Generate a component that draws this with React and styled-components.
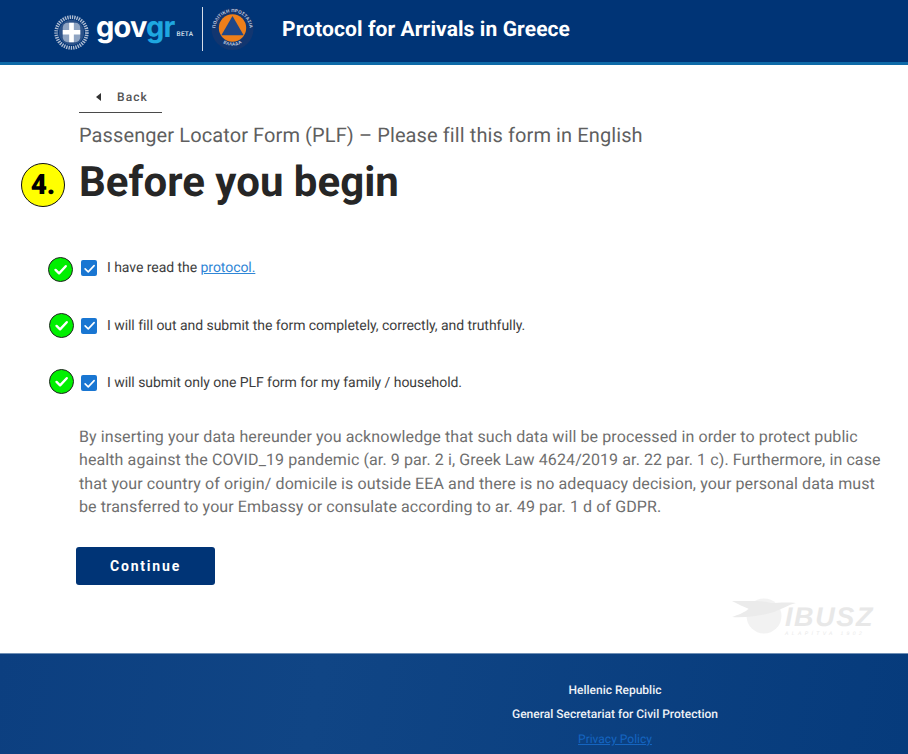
import React from "react";
import styled, { createGlobalStyle } from "styled-components";

const GlobalStyle = createGlobalStyle`
  html, body { margin: 0; padding: 0; background: #fff; }
  body {
    font-family: Roboto, "Liberation Sans", sans-serif;
    color: #212121;
    text-rendering: geometricPrecision;
  }
`;

const Emblem = () => (
  <svg width="35" height="35" viewBox="0 0 36 36">
    <circle cx="18" cy="18" r="15.8" fill="none" stroke="#aebcd2" strokeWidth="3.8" strokeDasharray="1.4 1" />
    <circle cx="18" cy="18" r="13" fill="#2c5288" />
    <rect x="9" y="8" width="18" height="20" rx="5" fill="#8fa4c2" />
    <path d="M15.6 8h4.8v7.4H27v4.6h-6.6V28h-4.8v-8H9v-4.6h6.6z" fill="#fff" />
  </svg>
);

const CivilProtection = () => (
  <svg width="43" height="44" viewBox="0 0 44 44">
    <defs>
      <path id="ringTop" d="M4.6 24a17.5 17.5 0 1 1 34.8 0" />
      <path id="ringBottom" d="M7 31a18 18 0 0 0 30 0" />
    </defs>
    <circle cx="22" cy="22" r="21.5" fill="#123670" />
    <RingText>
      <textPath href="#ringTop" startOffset="50%" textAnchor="middle">ΠΟΛΙΤΙΚΗ ΠΡΟΣΤΑΣΙΑ</textPath>
    </RingText>
    <RingText>
      <textPath href="#ringBottom" startOffset="50%" textAnchor="middle">ΕΛΛΑΔΑ</textPath>
    </RingText>
    <circle cx="22" cy="21" r="14" fill="#ef7f1a" />
    <path d="M22 8.6 33.4 28.4H10.6z" fill="#1f4788" />
  </svg>
);

const Check = ({ size, stroke, color }) => (
  <svg width={size} height={size} viewBox="0 0 24 24" fill="none">
    <path d="M5 12.6 10 17.4 19.4 7.4" stroke={color} strokeWidth={stroke} strokeLinecap="round" strokeLinejoin="round" />
  </svg>
);

const Watermark = () => (
  <WatermarkBox>
    <svg width="66" height="36" viewBox="0 0 66 36">
      <circle cx="33" cy="18" r="17.5" fill="#f2f2f2" />
      <path d="M1 3h24c6 0 11 1 15 2 6 0 15-1 25 0-8 2-14 6-22 9-10 3-26 6-42 5 6-2 13-5 17-8C13 9 7 6 1 3z" fill="#ebebeb" />
    </svg>
    <WatermarkText>
      IBUSZ
      <WatermarkSub>ALAPÍTVA 1902</WatermarkSub>
    </WatermarkText>
  </WatermarkBox>
);

const items = [
  { id: 1, text: "I have read the ", link: "protocol.", markTop: 1, markLeft: -33 },
  { id: 2, text: "I will fill out and submit the form completely, correctly, and truthfully.", markTop: -1, markLeft: -32 },
  { id: 3, text: "I will submit only one PLF form for my family / household.", markTop: -2, markLeft: -32 },
];

export default function App() {
  return (
    <>
      <GlobalStyle />
      <Page>
        <Header>
          <LogoRow>
            <EmblemSlot><Emblem /></EmblemSlot>
            <GovText>gov<GovAccent>gr</GovAccent></GovText>
            <Beta>BETA</Beta>
            <LogoDivider />
            <CivilProtection />
          </LogoRow>
          <HeaderTitle>Protocol for Arrivals in Greece</HeaderTitle>
        </Header>

        <Main>
          <BackLink>
            <BackArrow />
            Back
          </BackLink>
          <Subtitle>Passenger Locator Form (PLF) – Please fill this form in English</Subtitle>
          <Title>
            <StepBadge>4.</StepBadge>
            Before you begin
          </Title>

          <CheckList>
            {items.map((item) => (
              <CheckRow key={item.id}>
                <GreenMark $top={item.markTop} $left={item.markLeft}>
                  <Check size={17} stroke={3.4} color="#fff" />
                </GreenMark>
                <CheckBox>
                  <Check size={15} stroke={2.6} color="#fff" />
                </CheckBox>
                <CheckLabel>
                  {item.text}
                  {item.link && <ProtocolLink href="#">{item.link}</ProtocolLink>}
                </CheckLabel>
              </CheckRow>
            ))}
          </CheckList>

          <Notice>
            By inserting your data hereunder you acknowledge that such data will be processed in order to protect public
            health against the COVID_19 pandemic (ar. 9 par. 2 i, Greek Law 4624/2019 ar. 22 par. 1 c). Furthermore, in case
            that your country of origin/ domicile is outside EEA and there is no adequacy decision, your personal data must
            be transferred to your Embassy or consulate according to ar. 49 par. 1 d of GDPR.
          </Notice>

          <ContinueButton>Continue</ContinueButton>
          <Watermark />
        </Main>

        <Footer>
          <FooterColumn>
            <FooterLine>Hellenic Republic</FooterLine>
            <FooterLine>General Secretariat for Civil Protection</FooterLine>
            <FooterLink href="#">Privacy Policy</FooterLink>
          </FooterColumn>
        </Footer>
      </Page>
    </>
  );
}

const Page = styled.div`
  width: 908px;
  height: 754px;
  overflow: hidden;
  display: flex;
  flex-direction: column;
`;

const Header = styled.header`
  height: 62px;
  flex: none;
  display: flex;
  align-items: center;
  padding-left: 54px;
  background: #003476;
  border-bottom: 3px solid #0e6aa8;
  box-sizing: content-box;
`;

const LogoRow = styled.div`
  display: flex;
  align-items: center;
  margin-top: -4px;
  width: 228px;
`;

const EmblemSlot = styled.span`
  display: flex;
  margin-top: 6px;
`;

const RingText = styled.text`
  font-family: "Liberation Sans", sans-serif;
  font-size: 4.6px;
  font-weight: 700;
  letter-spacing: 0.2px;
  fill: #c3cfe0;
`;

const GovText = styled.span`
  margin: -5px 0 0 7px;
  font-family: Inter, sans-serif;
  font-weight: 700;
  font-size: 29px;
  line-height: 36px;
  letter-spacing: -0.8px;
  color: #fff;
`;

const GovAccent = styled.span`
  color: #1ea7e0;
`;

const Beta = styled.span`
  font-size: 6.5px;
  font-weight: 500;
  letter-spacing: 0.2px;
  color: #dfe6f0;
  margin: 9px 0 0 2px;
`;

const LogoDivider = styled.span`
  width: 1px;
  height: 44px;
  background: #d5dde8;
  margin: 0 8px 0 9px;
`;

const HeaderTitle = styled.h1`
  margin: -3px 0 0;
  font-size: 21px;
  font-weight: 700;
  letter-spacing: 0.1px;
  color: #fff;
`;

const Main = styled.main`
  position: relative;
  flex: 1;
  padding: 20px 0 0 79px;
`;

const BackLink = styled.div`
  width: 83px;
  height: 28px;
  box-sizing: border-box;
  display: flex;
  align-items: center;
  padding: 0 0 4px 17px;
  gap: 16px;
  border-bottom: 1px solid #4a4a4a;
  font-size: 12px;
  font-weight: 500;
  letter-spacing: 1.1px;
  color: #555;
`;

const BackArrow = styled.span`
  width: 0;
  height: 0;
  border-style: solid;
  border-width: 4px 5px 4px 0;
  border-color: transparent #333 transparent transparent;
`;

const Subtitle = styled.p`
  margin: 9px 0 0;
  font-size: 20px;
  line-height: 26px;
  letter-spacing: 0.1px;
  color: #5f5f5f;
`;

const Title = styled.h2`
  position: relative;
  margin: 10px 0 0;
  font-size: 42px;
  line-height: 50px;
  font-weight: 700;
  color: #262626;
`;

const StepBadge = styled.span`
  position: absolute;
  left: -58px;
  top: 5px;
  width: 42px;
  height: 42px;
  border: 1px solid #111;
  border-radius: 50%;
  background: #ffff00;
  display: flex;
  align-items: center;
  justify-content: center;
  font-size: 28px;
  font-weight: 900;
  color: #000;
`;

const CheckList = styled.div`
  margin-top: 48px;
  margin-left: 2px;
  display: flex;
  flex-direction: column;
  gap: 33.5px;
`;

const CheckRow = styled.div`
  position: relative;
  height: 24px;
  display: flex;
  align-items: center;
  gap: 10px;
`;

const GreenMark = styled.span`
  position: absolute;
  left: ${(p) => p.$left}px;
  top: ${(p) => p.$top}px;
  width: 23px;
  height: 23px;
  border: 1px solid #222;
  border-radius: 50%;
  background: #00f000;
  display: flex;
  align-items: center;
  justify-content: center;
`;

const CheckBox = styled.span`
  width: 16px;
  height: 16px;
  border-radius: 2px;
  background: #1976d2;
  display: flex;
  align-items: center;
  justify-content: center;
`;

const CheckLabel = styled.span`
  font-size: 14px;
  letter-spacing: -0.05px;
  color: #3d3d3d;
`;

const ProtocolLink = styled.a`
  color: #2f86d6;
`;

const Notice = styled.p`
  margin: 30px 0 0;
  width: 815px;
  font-size: 16px;
  line-height: 23.4px;
  letter-spacing: 0.1px;
  color: #6f6f6f;
`;

const ContinueButton = styled.button`
  display: block;
  margin: 28px 0 0 -3px;
  padding: 1px 0 0;
  width: 139px;
  height: 38px;
  border: 0;
  border-radius: 3px;
  background: #003476;
  color: #fff;
  font-family: Roboto, sans-serif;
  font-size: 14px;
  font-weight: 700;
  letter-spacing: 1.8px;
`;

const WatermarkBox = styled.div`
  position: absolute;
  left: 731px;
  top: 533px;
  display: flex;
  align-items: flex-start;
`;

const WatermarkText = styled.div`
  margin: 6px 0 0 -12px;
  font-family: "Liberation Sans", sans-serif;
  font-style: italic;
  font-weight: 700;
  font-size: 27px;
  line-height: 27px;
  letter-spacing: 1.6px;
  color: #e8e8e8;
`;

const WatermarkSub = styled.div`
  font-size: 5px;
  line-height: 6px;
  letter-spacing: 3.4px;
  font-weight: 400;
  white-space: nowrap;
`;

const Footer = styled.footer`
  height: 101px;
  flex: none;
  display: flex;
  justify-content: flex-end;
  padding-right: 190px;
  background: linear-gradient(100deg, #0c3f80 0%, #104585 35%, #063b7c 100%);
  border-top: 1px solid #6f8fb5;
  box-sizing: border-box;
`;

const FooterColumn = styled.div`
  padding-top: 27px;
  display: flex;
  flex-direction: column;
  align-items: center;
  gap: 6px;
`;

const FooterLine = styled.div`
  font-size: 12px;
  line-height: 18px;
  font-weight: 500;
  color: #eef2f7;
`;

const FooterLink = styled.a`
  margin-top: 1px;
  font-size: 12px;
  line-height: 18.5px;
  color: #1565c0;
`;
